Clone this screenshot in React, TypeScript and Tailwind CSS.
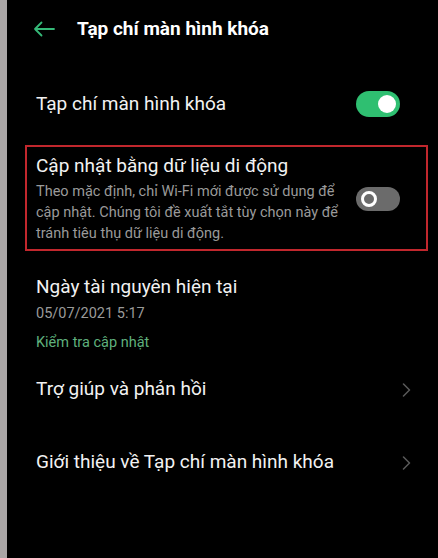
function Toggle({ on }: { on: boolean }) {
    if (on) {
        return (
            <div className="w-[44px] h-[26px] rounded-full bg-[#2fbf71] flex items-center justify-end pr-[4px] shrink-0">
                <div className="w-[18px] h-[18px] rounded-full bg-white" />
            </div>
        );
    }
    return (
        <div className="w-[44px] h-[24px] rounded-full bg-[#6b6b6b] flex items-center pl-[5px] shrink-0">
            <div className="w-[16px] h-[16px] rounded-full border-[3px] border-white bg-[#6b6b6b]" />
        </div>
    );
}

function LinkRow({ label }: { label: string }) {
    return (
        <div className="flex items-center justify-between pl-[29px] pr-[27px] h-[73px]">
            <span className="text-[19px] text-[#f2f2f2]">{label}</span>
            <svg width="9" height="14" viewBox="0 0 9 14" fill="none" className="shrink-0">
                <path d="M1.5 1l6 6-6 6" stroke="#5a5a5a" strokeWidth="1.5" strokeLinecap="round" strokeLinejoin="round" />
            </svg>
        </div>
    );
}

export default function App() {
    return (
        <div
            className="flex w-[438px] h-[558px] bg-black overflow-hidden"
            style={{ fontFamily: 'Roboto, "Noto Sans", sans-serif' }}
        >
            {/* thanh xám bên trái */}
            <div className="w-[7px] bg-[#aaa6a6] shrink-0" />

            <div className="flex-1 flex flex-col">
                {/* Header */}
                <div className="flex items-center h-[58px] pl-[26px]">
                    <svg width="22" height="16" viewBox="0 0 22 16" fill="none" className="shrink-0">
                        <path d="M21 8H2M8.5 1.5L2 8l6.5 6.5" stroke="#35b978" strokeWidth="1.8" strokeLinecap="round" strokeLinejoin="round" />
                    </svg>
                    <h1 className="ml-[22px] text-[19px] font-bold text-white">Tạp chí màn hình khóa</h1>
                </div>

                {/* Tạp chí màn hình khóa */}
                <div className="flex items-center justify-between pl-[29px] pr-[38px] mt-[17px] h-[58px]">
                    <span className="text-[19px] text-[#f2f2f2]">Tạp chí màn hình khóa</span>
                    <Toggle on />
                </div>

                {/* Cập nhật bằng dữ liệu di động */}
                <div className="ml-[18px] mr-[10px] mt-[12px] border-2 border-[#c1272d] flex items-center justify-between pl-[9px] pr-[26px] pt-[6px] pb-[5px]">
                    <div className="flex flex-col">
                        <span className="text-[19px] text-[#f2f2f2] leading-[26px]">Cập nhật bằng dữ liệu di động</span>
                        <p className="text-[14.5px] text-[#9a9a9a] leading-[21px] w-[304px] mt-[2px]">
                            Theo mặc định, chỉ Wi-Fi mới được sử dụng để cập nhật. Chúng tôi đề xuất tắt tùy chọn này để tránh tiêu thụ dữ liệu di động.
                        </p>
                    </div>
                    <Toggle on={false} />
                </div>

                {/* Ngày tài nguyên hiện tại */}
                <div className="flex flex-col pl-[29px] mt-[23px]">
                    <span className="text-[19px] text-[#f2f2f2] leading-[26px]">Ngày tài nguyên hiện tại</span>
                    <span className="text-[14.5px] text-[#9a9a9a] leading-[20px] mt-[4px]">05/07/2021 5:17</span>
                    <span className="text-[14.5px] text-[#5fb07d] leading-[20px] mt-[9px]">Kiểm tra cập nhật</span>
                </div>

                <div className="mt-[0px]">
                    <LinkRow label="Trợ giúp và phản hồi" />
                    <LinkRow label="Giới thiệu về Tạp chí màn hình khóa" />
                </div>
            </div>
        </div>
    );
}
